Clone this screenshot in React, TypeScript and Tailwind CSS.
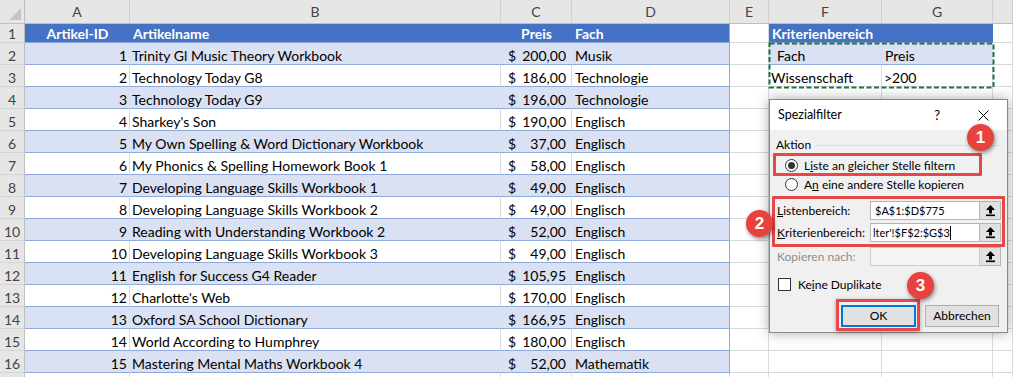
import React from "react";

const rows: [number, string, string, string][] = [
  [1, "Trinity Gl Music Theory Workbook", "200,00", "Musik"],
  [2, "Technology Today G8", "186,00", "Technologie"],
  [3, "Technology Today G9", "196,00", "Technologie"],
  [4, "Sharkey's Son", "190,00", "Englisch"],
  [5, "My Own Spelling & Word Dictionary Workbook", "37,00", "Englisch"],
  [6, "My Phonics & Spelling Homework Book 1", "58,00", "Englisch"],
  [7, "Developing Language Skills Workbook 1", "49,00", "Englisch"],
  [8, "Developing Language Skills Workbook 2", "49,00", "Englisch"],
  [9, "Reading with Understanding Workbook 2", "52,00", "Englisch"],
  [10, "Developing Language Skills Workbook 3", "49,00", "Englisch"],
  [11, "English for Success G4 Reader", "105,95", "Englisch"],
  [12, "Charlotte's Web", "170,00", "Englisch"],
  [13, "Oxford SA School Dictionary", "166,95", "Englisch"],
  [14, "World According to Humphrey", "180,00", "Englisch"],
  [15, "Mastering Mental Maths Workbook 4", "52,00", "Mathematik"],
];

const font = { fontFamily: "Lato, 'Liberation Sans', sans-serif" };
const uiFont = { fontFamily: "Lato, 'Noto Sans', sans-serif" };

const RH = "flex items-end justify-center leading-[17px] bg-[#e6e6e6] border-r border-b border-r-[#bfbfbf] border-b-[#d4d4d4] text-[#444] text-[14px]";
const G = "flex items-end leading-[17px] whitespace-nowrap overflow-hidden bg-white border-r border-b border-[#dadada] text-[14px] text-black";

function UpIcon() {
  return (
    <svg width="11" height="13" viewBox="0 0 11 13">
      <polygon points="5.5,1 1,6 10,6" fill="#000" />
      <rect x="4" y="5.5" width="3" height="4" fill="#000" />
      <rect x="1" y="10.5" width="9" height="1.6" fill="#000" />
    </svg>
  );
}

export default function App() {
  return (
    <div className="relative w-[1013px] h-[377px] overflow-hidden bg-white" style={font}>
      <div className="grid grid-cols-[25px_105px_371px_71px_158px_39px_113px_111px_20px]">
        {/* column header */}
        <div className="relative h-[24px] bg-[#e6e6e6] border-r border-b border-[#bfbfbf]">
          <div className="absolute right-[3px] bottom-[3px] w-0 h-0 border-l-[12px] border-l-transparent border-b-[12px] border-b-[#c4c4c4]" />
        </div>
        {["A", "B", "C", "D", "E", "F", "G", ""].map((l, k) => (
          <div key={k} className="h-[24px] flex items-center justify-center bg-[#e6e6e6] border-r border-b border-r-[#d0d0d0] border-b-[#bfbfbf] text-[#444] text-[14px]">
            {l}
          </div>
        ))}

        {/* row 1 */}
        <div className="h-[19px] flex items-center justify-center bg-[#e6e6e6] border-r border-b border-r-[#bfbfbf] border-b-[#d4d4d4] text-[#444] text-[14px]">1</div>
        <div className="h-[19px] flex items-center justify-center bg-[#4472c4] border-b border-[#8ea9db] text-white font-bold text-[14px]">Artikel-ID</div>
        <div className="h-[19px] flex items-center px-[3px] bg-[#4472c4] border-b border-[#8ea9db] text-white font-bold text-[14px]">Artikelname</div>
        <div className="h-[19px] flex items-center justify-center bg-[#4472c4] border-b border-[#8ea9db] text-white font-bold text-[14px]">Preis</div>
        <div className="h-[19px] flex items-center px-[3px] bg-[#4472c4] border-b border-r border-b-[#8ea9db] border-r-[#8ea9db] text-white font-bold text-[14px]">Fach</div>
        <div className={`${G} h-[19px]`} />
        <div className="h-[19px] col-span-2 flex items-center px-[3px] bg-[#4472c4] border-r border-b border-[#4472c4] border-b-[#8ea9db] text-white font-bold text-[14px]">Kriterienbereich</div>
        <div className={`${G} h-[19px]`} />

        {rows.map(([id, name, price, fach], i) => {
          const r = i + 2;
          const blue = r % 2 === 0;
          const base = blue
            ? "h-[22px] flex items-end leading-[17px] whitespace-nowrap overflow-hidden bg-[#d9e1f2] border-b border-r border-b-[#8ea9db] border-r-[#d9e1f2] text-[14px] text-black"
            : "h-[22px] flex items-end leading-[17px] whitespace-nowrap overflow-hidden bg-white border-b border-r border-b-[#8ea9db] border-r-[#dadada] text-[14px] text-black";
          const lastT = blue
            ? "h-[22px] flex items-end leading-[17px] whitespace-nowrap overflow-hidden bg-[#d9e1f2] border-b border-r border-[#8ea9db] px-[3px] text-[14px] text-black"
            : "h-[22px] flex items-end leading-[17px] whitespace-nowrap overflow-hidden bg-white border-b border-r border-[#8ea9db] px-[3px] text-[14px] text-black";
          return (
            <React.Fragment key={id}>
              <div className={`${RH} h-[22px]`}>{r}</div>
              <div className={`${base} justify-end pr-[2px]`}>{id}</div>
              <div className={`${base} px-[2px]`}>{name}</div>
              <div className={`${base} justify-between pl-[7px] pr-[5px]`}>
                <span>$</span>
                <span>{price}</span>
              </div>
              <div className={lastT}>{fach}</div>
              <div className={`${G} h-[22px]`} />
              {r === 2 ? (
                <>
                  <div className="h-[22px] flex items-end leading-[17px] pl-[8px] bg-[#d9e1f2] border-b border-r border-b-[#8ea9db] border-r-[#d9e1f2] text-[14px]">Fach</div>
                  <div className="h-[22px] flex items-end leading-[17px] pl-[3px] bg-[#d9e1f2] border-b border-r border-[#8ea9db] border-r-[#d9e1f2] text-[14px]">Preis</div>
                </>
              ) : r === 3 ? (
                <>
                  <div className={`${G} h-[22px] px-[2px]`}>Wissenschaft</div>
                  <div className={`${G} h-[22px] px-[2px]`}>&gt;200</div>
                </>
              ) : (
                <>
                  <div className={`${G} h-[22px]`} />
                  <div className={`${G} h-[22px]`} />
                </>
              )}
              <div className={`${G} h-[22px]`} />
            </React.Fragment>
          );
        })}
        <div className={`${RH} h-[22px]`} />
        {[0, 1, 2, 3, 4, 5, 6, 7].map((k) => (
          <div key={k} className={`${G} h-[22px]`} />
        ))}
      </div>

      {/* marching ants */}
      <svg className="absolute left-[768px] top-[42px]" width="227" height="47">
        <rect x="1.5" y="1.5" width="224" height="44" fill="none" stroke="#217346" strokeWidth="2" strokeDasharray="5 2.5" />
      </svg>

      {/* dialog */}
      <div className="absolute left-[769px] top-[99px] w-[239px] h-[234px] flex flex-col bg-[#f0f0f0] border border-[#8a8a8a] shadow-[0_0_12px_rgba(0,0,0,0.35)] text-[12px] leading-[16px] text-black" style={uiFont}>
        <div className="h-[30px] flex items-center bg-white pl-[8px] pr-[18px] shrink-0">
          <span className="flex-1 text-[12.5px]">Spezialfilter</span>
          <span className="mr-[38px] text-[13px]">?</span>
          <svg width="11" height="11" viewBox="0 0 11 11">
            <path d="M0.5 0.5 L10.5 10.5 M10.5 0.5 L0.5 10.5" stroke="#000" strokeWidth="1" />
          </svg>
        </div>
        <div className="flex flex-col px-[6px] pt-[6px]">
          <div className="flex items-center gap-[6px] h-[18px]">
            <span>Aktion</span>
            <div className="flex-1 h-px bg-[#dcdcdc]" />
          </div>
          <div className="flex items-center h-[19px] mt-[2px] pl-[9px]">
            <span className="w-[13px] h-[13px] rounded-full border border-[#333] bg-white flex items-center justify-center">
              <span className="w-[7px] h-[7px] rounded-full bg-[#333]" />
            </span>
            <span className="ml-[6px]">L<u>i</u>ste an gleicher Stelle filtern</span>
          </div>
          <div className="flex items-center h-[19px] pl-[9px]">
            <span className="w-[13px] h-[13px] rounded-full border border-[#333] bg-white" />
            <span className="ml-[6px]">A<u>n</u> eine andere Stelle kopieren</span>
          </div>
          <div className="flex flex-col gap-[3px] mt-[7px]">
            <div className="flex items-center h-[19px]">
              <span className="w-[94px] pl-[1px]"><u>L</u>istenbereich:</span>
              <div className="w-[110px] h-[19px] flex items-center bg-white border border-[#b5b5b5] pl-[4px] text-[11px]">$A$1:$D$775</div>
              <div className="w-[21px] h-[19px] flex items-center justify-center bg-[#e1e1e1] border border-[#b5b5b5] border-l-0"><UpIcon /></div>
            </div>
            <div className="flex items-center h-[19px]">
              <span className="w-[94px] pl-[1px]"><u>K</u>riterienbereich:</span>
              <div className="w-[110px] h-[19px] flex items-center bg-white border border-[#b5b5b5] pl-[2px] overflow-hidden whitespace-nowrap text-[11px]">
                lter'!$F$2:$G$3<span className="inline-block w-px h-[14px] bg-black" />
              </div>
              <div className="w-[21px] h-[19px] flex items-center justify-center bg-[#e1e1e1] border border-[#b5b5b5] border-l-0"><UpIcon /></div>
            </div>
            <div className="flex items-center h-[19px] mt-[2px]">
              <span className="w-[94px] pl-[1px] text-[#8d8d8d]">Kopieren nach:</span>
              <div className="w-[110px] h-[19px] bg-[#f4f4f4] border border-[#cccccc]" />
              <div className="w-[21px] h-[19px] flex items-center justify-center bg-[#e1e1e1] border border-[#b5b5b5] border-l-0"><UpIcon /></div>
            </div>
          </div>
          <div className="flex items-center h-[13px] mt-[12px] pl-[2px]">
            <span className="w-[13px] h-[13px] border border-[#333] bg-white" />
            <span className="ml-[7px]">Ke<u>i</u>ne Duplikate</span>
          </div>
          <div className="flex justify-end gap-[9px] mt-[14px] pr-[2px]">
            <div className="w-[75px] h-[22px] flex items-center justify-center bg-[#e1e1e1] border-2 border-[#0078d7]">OK</div>
            <div className="w-[74px] h-[22px] flex items-center justify-center bg-[#e1e1e1] border border-[#adadad]">Abbrechen</div>
          </div>
        </div>
      </div>

      {/* annotation boxes */}
      <div className="absolute left-[773px] top-[153px] w-[209px] h-[23px] border-[3px] border-[#e8474a] rounded-[1px]" />
      <div className="absolute left-[772px] top-[196px] w-[233px] h-[51px] border-[3px] border-[#e8474a] rounded-[1px]" />
      <div className="absolute left-[836px] top-[299px] w-[84px] h-[32px] border-[3px] border-[#e8474a] rounded-[1px] shadow-[0_1px_4px_rgba(0,0,0,0.35)]" />

      {/* badges */}
      <div className="absolute left-[967px] top-[124px] w-[27px] h-[27px] rounded-full bg-[#e8413e] shadow-[1px_2px_4px_rgba(0,0,0,0.45)] flex items-center justify-center text-white font-bold text-[17px]" style={{ fontFamily: "'Liberation Sans', sans-serif" }}>1</div>
      <div className="absolute left-[746px] top-[210px] w-[27px] h-[27px] rounded-full bg-[#e8413e] shadow-[1px_2px_4px_rgba(0,0,0,0.45)] flex items-center justify-center text-white font-bold text-[17px]" style={{ fontFamily: "'Liberation Sans', sans-serif" }}>2</div>
      <div className="absolute left-[907px] top-[272px] w-[27px] h-[27px] rounded-full bg-[#e8413e] shadow-[1px_2px_4px_rgba(0,0,0,0.45)] flex items-center justify-center text-white font-bold text-[17px]" style={{ fontFamily: "'Liberation Sans', sans-serif" }}>3</div>
    </div>
  );
}
